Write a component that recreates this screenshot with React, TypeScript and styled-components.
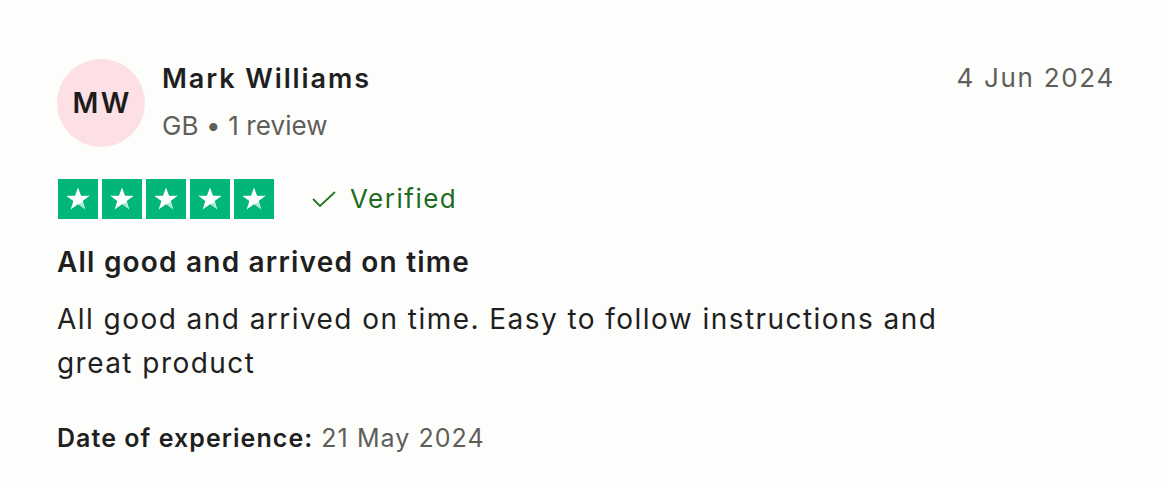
import React from "react";
import styled, { createGlobalStyle } from "styled-components";

const Global = createGlobalStyle`
  html, body { margin: 0; padding: 0; background: #fdfdfc; }
  body { font-family: Inter, "Liberation Sans", sans-serif; color: #1f1f1f; -webkit-font-smoothing: antialiased; }
`;

const Card = styled.article`
  width: 1161px;
  height: 488px;
  box-sizing: border-box;
  padding: 59px 46px 0 57px;
  display: flex;
  flex-direction: column;
`;

const Header = styled.header`
  display: flex;
  align-items: flex-start;
`;

const Avatar = styled.div`
  width: 88px;
  height: 88px;
  border-radius: 50%;
  background: #fde0e6;
  display: flex;
  align-items: center;
  justify-content: center;
  font-size: 28px;
  font-weight: 600;
  letter-spacing: 2.5px;
  text-indent: 2.5px;
  color: #1c1c1c;
  flex-shrink: 0;
`;

const Who = styled.div`
  margin-left: 17px;
  display: flex;
  flex-direction: column;
  flex: 1;
  padding-top: 1px;
`;

const Name = styled.div`
  font-size: 27px;
  font-weight: 600;
  line-height: 37px;
  color: #1f1f1f;
  letter-spacing: 1.9px;
`;

const Meta = styled.div`
  font-size: 26px;
  line-height: 36px;
  margin-top: 11px;
  color: #5f5e5a;
  letter-spacing: 0.1px;
`;

const DateText = styled.time`
  font-size: 26px;
  line-height: 36px;
  color: #5f5e5a;
  padding-top: 1px;
  letter-spacing: 1.7px;
`;

const RatingRow = styled.div`
  margin-top: 32px;
  display: flex;
  align-items: center;
  height: 40px;
  padding-left: 1px;
`;

const Stars = styled.div`
  display: flex;
  gap: 4px;
`;

const StarBox = styled.div`
  width: 40px;
  height: 40px;
  background: #00b67a;
  display: flex;
  align-items: center;
  justify-content: center;
`;

const Verified = styled.div`
  margin-left: 38px;
  display: flex;
  align-items: center;
  gap: 14px;
  color: #1d6b1f;
  font-size: 26px;
  line-height: 36px;
  letter-spacing: 1.5px;
`;

const Title = styled.h2`
  margin: 23px 0 0;
  font-size: 28px;
  font-weight: 600;
  line-height: 40px;
  color: #1f1f1f;
  letter-spacing: 1.2px;
`;

const Body = styled.p`
  margin: 15px 0 0;
  font-size: 28px;
  line-height: 44px;
  color: #1f1f1f;
  max-width: 920px;
  letter-spacing: 1.45px;
`;

const Experience = styled.p`
  margin: 36px 0 0;
  font-size: 25px;
  line-height: 34px;
  color: #5f5e5a;
  letter-spacing: 1.05px;
`;

const Strong = styled.b`
  font-weight: 600;
  color: #1f1f1f;
`;

const Star = () => (
  <svg width="28" height="28" viewBox="0 0 24 24">
    <path
      d="M12 2.2l2.6 7.1h7.5l-6.1 4.5 2.3 7.3L12 16.6l-6.3 4.5 2.3-7.3-6.1-4.5h7.5z"
      fill="#fff"
    />
    <path d="M12 16.6l3.6-1.7 2.7 6.2z" fill="#00b67a" opacity="0.35" />
  </svg>
);

const Check = () => (
  <svg width="24" height="16" viewBox="0 0 24 16">
    <polyline points="1,8 8,15 23,1" fill="none" stroke="#1d7a1f" strokeWidth="1.8" />
  </svg>
);

export default function App() {
  return (
    <>
      <Global />
      <Card>
        <Header>
          <Avatar>MW</Avatar>
          <Who>
            <Name>Mark Williams</Name>
            <Meta>GB • 1 review</Meta>
          </Who>
          <DateText>4 Jun 2024</DateText>
        </Header>
        <RatingRow>
          <Stars>
            {[0, 1, 2, 3, 4].map((i) => (
              <StarBox key={i}>
                <Star />
              </StarBox>
            ))}
          </Stars>
          <Verified>
            <Check />
            Verified
          </Verified>
        </RatingRow>
        <Title>All good and arrived on time</Title>
        <Body>
          All good and arrived on time. Easy to follow instructions and great product
        </Body>
        <Experience>
          <Strong>Date of experience:</Strong> 21 May 2024
        </Experience>
      </Card>
    </>
  );
}
